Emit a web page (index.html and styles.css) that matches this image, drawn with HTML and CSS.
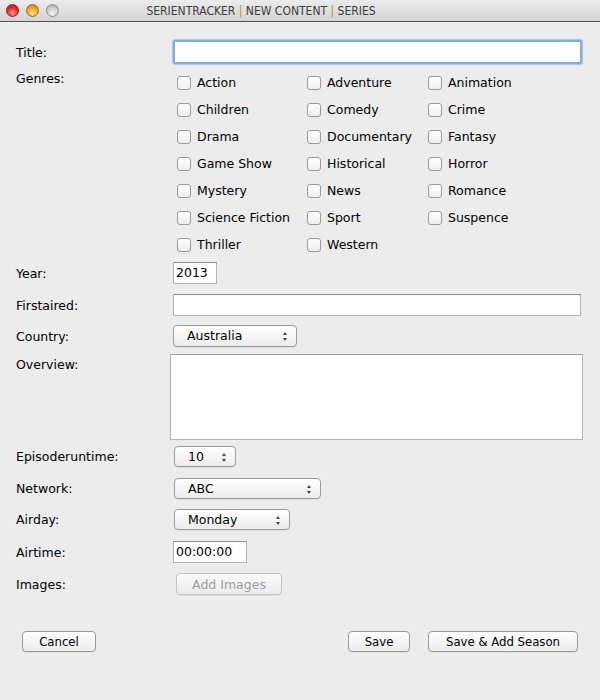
FILE: index.html
```html
<!DOCTYPE html>
<html>
<head>
<meta charset="utf-8">
<link rel="stylesheet" href="styles.css">
</head>
<body>
<div class="window">
  <div class="titlebar">
    <div class="lights">
      <span class="light red"></span>
      <span class="light orange"></span>
      <span class="light gray"></span>
    </div>
    <div class="wtitle">SERIENTRACKER <span class="sep">|</span> NEW CONTENT <span class="sep">|</span> SERIES</div>
  </div>
  <div class="content">
    <div class="row r-title">
      <label class="lbl">Title:</label>
      <div class="field focus wide"></div>
    </div>
    <div class="row r-genres">
      <label class="lbl top">Genres:</label>
      <div class="genres">
        <div class="cb"><span class="box"></span>Action</div>
        <div class="cb"><span class="box"></span>Adventure</div>
        <div class="cb"><span class="box"></span>Animation</div>
        <div class="cb"><span class="box"></span>Children</div>
        <div class="cb"><span class="box"></span>Comedy</div>
        <div class="cb"><span class="box"></span>Crime</div>
        <div class="cb"><span class="box"></span>Drama</div>
        <div class="cb"><span class="box"></span>Documentary</div>
        <div class="cb"><span class="box"></span>Fantasy</div>
        <div class="cb"><span class="box"></span>Game Show</div>
        <div class="cb"><span class="box"></span>Historical</div>
        <div class="cb"><span class="box"></span>Horror</div>
        <div class="cb"><span class="box"></span>Mystery</div>
        <div class="cb"><span class="box"></span>News</div>
        <div class="cb"><span class="box"></span>Romance</div>
        <div class="cb"><span class="box"></span>Science Fiction</div>
        <div class="cb"><span class="box"></span>Sport</div>
        <div class="cb"><span class="box"></span>Suspence</div>
        <div class="cb"><span class="box"></span>Thriller</div>
        <div class="cb"><span class="box"></span>Western</div>
      </div>
    </div>
    <div class="row r-year">
      <label class="lbl">Year:</label>
      <div class="field year">2013</div>
    </div>
    <div class="row r-first">
      <label class="lbl">Firstaired:</label>
      <div class="field wide2"></div>
    </div>
    <div class="row r-country">
      <label class="lbl">Country:</label>
      <div class="popup country">Australia<span class="arrows"></span></div>
    </div>
    <div class="row r-over">
      <label class="lbl top2">Overview:</label>
      <div class="textarea"></div>
    </div>
    <div class="row r-runtime">
      <label class="lbl">Episoderuntime:</label>
      <div class="popup runtime">10<span class="arrows"></span></div>
    </div>
    <div class="row r-net">
      <label class="lbl">Network:</label>
      <div class="popup network">ABC<span class="arrows"></span></div>
    </div>
    <div class="row r-airday">
      <label class="lbl">Airday:</label>
      <div class="popup airday">Monday<span class="arrows"></span></div>
    </div>
    <div class="row r-airtime">
      <label class="lbl">Airtime:</label>
      <div class="field airtime">00:00:00</div>
    </div>
    <div class="row r-images">
      <label class="lbl">Images:</label>
      <div class="btn disabled addimg">Add Images</div>
    </div>
    <div class="actions">
      <div class="btn cancel">Cancel</div>
      <div class="right">
        <div class="btn save">Save</div>
        <div class="btn saveadd">Save &amp; Add Season</div>
      </div>
    </div>
  </div>
</div>
</body>
</html>
```

FILE: styles.css
```css
* { box-sizing: border-box; }
html, body { margin: 0; padding: 0; }
body {
  width: 600px;
  height: 700px;
  background: #ececec;
  font-family: "DejaVu Sans", "Noto Sans", sans-serif;
  font-size: 12.5px;
  color: #000;
  overflow: hidden;
}
.window { width: 600px; height: 700px; }
.titlebar {
  height: 22px;
  position: relative;
  background: linear-gradient(#ececec, #d3d3d3);
  border-bottom: 1px solid #555;
  display: flex;
  align-items: center;
  justify-content: center;
}
.lights {
  position: absolute;
  left: 6px;
  top: 4px;
  display: flex;
  gap: 7px;
}
.light {
  width: 13px;
  height: 13px;
  border-radius: 50%;
  display: block;
}
.light.red {
  background: radial-gradient(circle at 50% 75%, #ff9a9a 0, #e8282b 55%, #b01214 100%);
  border: 1px solid #9a1a1a;
}
.light.orange {
  background: radial-gradient(circle at 50% 75%, #ffe08a 0, #f0a526 55%, #b8720f 100%);
  border: 1px solid #a26a1c;
}
.light.gray {
  background: radial-gradient(circle at 50% 75%, #f4f4f4 0, #cdcdcd 55%, #9d9d9d 100%);
  border: 1px solid #8f8f8f;
}
.wtitle {
  font-family: "DejaVu Sans Condensed", "DejaVu Sans", sans-serif;
  font-size: 12px;
  color: #3d3d3d;
  padding-right: 78px;
}
.sep { color: #c48a35; }

.content { padding: 18px 0 0 16px; }
.row { display: flex; align-items: center; }
.lbl { width: 157px; flex: none; }
.lbl.top { align-self: flex-start; padding-top: 2px; }
.lbl.top2 { align-self: flex-start; padding-top: 3px; }

.field {
  height: 22px;
  background: #fff;
  border: 1px solid #b2b2b2;
  border-top-color: #8e8e8e;
  padding: 2px 2px 0 2px;
  line-height: 16px;
  font-size: 12.5px;
}
.field.focus {
  height: 24px;
  width: 409px;
  border: 2px solid #85addb;
  box-shadow: 0 0 1px 1px #a9c6ea;
  border-radius: 2px;
}
.field.wide2 { width: 408px; }
.field.year { width: 44px; }
.field.airtime { width: 74px; }

.r-genres { margin-top: 5px; align-items: flex-start; }
.genres {
  display: grid;
  grid-template-columns: 130px 121px 130px;
  grid-auto-rows: 27px;
  padding-left: 4px;
}
.cb { display: flex; align-items: center; gap: 6px; white-space: nowrap; }
.box {
  width: 14px;
  height: 14px;
  border: 1px solid #9b9b9b;
  border-radius: 3px;
  background: linear-gradient(#ffffff, #eeeeee);
  flex: none;
}

.r-year { margin-top: 4px; }
.r-first { margin-top: 10px; }
.r-country { margin-top: 9px; }
.r-over { margin-top: 7px; align-items: flex-start; }
.r-runtime { margin-top: 6px; }
.r-net { margin-top: 11px; }
.r-airday { margin-top: 10px; }
.r-airtime { margin-top: 11px; }
.r-images { margin-top: 10px; }

.popup {
  position: relative;
  height: 22px;
  border: 1px solid #9c9c9c;
  border-radius: 4px;
  background: linear-gradient(#ffffff 0%, #f6f6f6 50%, #ebebeb 100%);
  padding-left: 13px;
  line-height: 20px;
  box-shadow: 0 1px 0 rgba(0,0,0,0.06);
}
.popup.country { width: 124px; }
.popup.runtime { width: 62px; height: 21px; line-height: 19px; margin-left: 1px; }
.popup.network { width: 147px; height: 21px; line-height: 19px; margin-left: 1px; }
.popup.airday { width: 116px; height: 21px; line-height: 19px; margin-left: 1px; }
.arrows {
  position: absolute;
  right: 8px;
  top: 50%;
  width: 5px;
  height: 9px;
  margin-top: -4px;
}
.arrows::before, .arrows::after {
  content: "";
  position: absolute;
  left: 0;
  border-left: 2.5px solid transparent;
  border-right: 2.5px solid transparent;
}
.arrows::before { top: 0; border-bottom: 3px solid #444; }
.arrows::after { bottom: 0; border-top: 3px solid #444; }

.textarea {
  width: 413px;
  height: 86px;
  margin-left: -3px;
  background: #fff;
  border: 1px solid #b3b3b3;
  border-top-color: #9e9e9e;
}

.btn {
  height: 21px;
  border: 1px solid #9a9a9a;
  border-radius: 4px;
  background: linear-gradient(#ffffff 0%, #f5f5f5 50%, #ececec 100%);
  display: flex;
  align-items: center;
  justify-content: center;
  font-family: "DejaVu Sans Condensed", "DejaVu Sans", sans-serif;
  font-size: 13px;
  box-shadow: 0 1px 0 rgba(0,0,0,0.05);
}
.btn.disabled {
  color: #9d9d9d;
  border-color: #c3c3c3;
  background: linear-gradient(#f9f9f9, #ececec);
  font-family: "DejaVu Sans", sans-serif;
  font-size: 12.5px;
}
.addimg { width: 106px; margin-left: 3px; height: 22px; }

.actions {
  display: flex;
  justify-content: space-between;
  margin-top: 36px;
  margin-left: 6px;
  width: 556px;
}
.right { display: flex; gap: 18px; }
.cancel { width: 74px; }
.save { width: 62px; }
.saveadd { width: 150px; }
```
